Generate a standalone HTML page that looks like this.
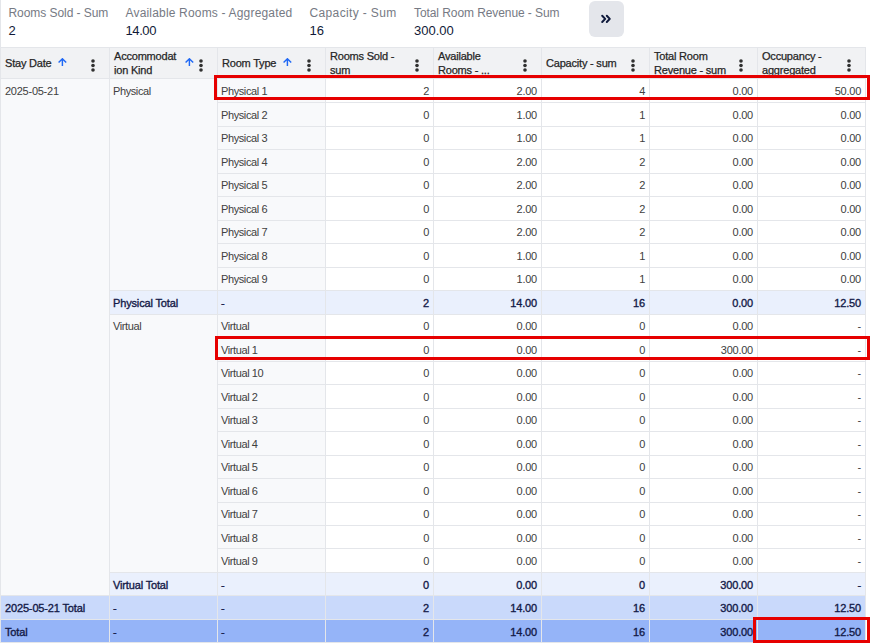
<!DOCTYPE html>
<html><head><meta charset="utf-8"><style>
html,body{margin:0;padding:0;background:#fff;width:870px;height:643px;overflow:hidden;position:relative;font-family:"Liberation Sans", sans-serif}
body>div,body>svg{position:absolute}
.t,.tl,.b,.h,.sl,.sv{position:absolute;white-space:nowrap;line-height:14px}
.t{font-size:11px;color:#404040;letter-spacing:-0.25px}
.tl{font-size:11px;color:#404040;letter-spacing:-0.4px}
.b{font-size:11px;color:#141a48;letter-spacing:-0.15px;-webkit-text-stroke:0.35px #141a48}
.h{font-size:11px;color:#262626;letter-spacing:-0.2px;-webkit-text-stroke:0.25px #262626}
.sl{font-size:12px;color:#767a84}
.sv{font-size:13px;color:#111a38}
</style></head><body>
<div style="left:0px;top:47px;width:866px;height:596px;background:#e4e6ea;"></div>
<div style="left:1px;top:48px;width:108px;height:30px;background:#f1f2f4;"></div>
<div style="left:110px;top:48px;width:107px;height:30px;background:#f1f2f4;"></div>
<div style="left:218px;top:48px;width:107px;height:30px;background:#f1f2f4;"></div>
<div style="left:326px;top:48px;width:107px;height:30px;background:#f1f2f4;"></div>
<div style="left:434px;top:48px;width:107px;height:30px;background:#f1f2f4;"></div>
<div style="left:542px;top:48px;width:107px;height:30px;background:#f1f2f4;"></div>
<div style="left:650px;top:48px;width:107px;height:30px;background:#f1f2f4;"></div>
<div style="left:758px;top:48px;width:107px;height:30px;background:#f1f2f4;"></div>
<div style="left:1px;top:79px;width:108px;height:516px;background:#f8f9fb;"></div>
<div style="left:110px;top:79px;width:107px;height:211px;background:#f8f9fb;"></div>
<div style="left:110px;top:315px;width:107px;height:257px;background:#f8f9fb;"></div>
<div style="left:218px;top:79px;width:107px;height:23px;background:#f8f9fb;"></div>
<div style="left:326px;top:79px;width:107px;height:23px;background:#ffffff;"></div>
<div style="left:434px;top:79px;width:107px;height:23px;background:#ffffff;"></div>
<div style="left:542px;top:79px;width:107px;height:23px;background:#ffffff;"></div>
<div style="left:650px;top:79px;width:107px;height:23px;background:#ffffff;"></div>
<div style="left:758px;top:79px;width:107px;height:23px;background:#ffffff;"></div>
<div style="left:218px;top:103px;width:107px;height:23px;background:#f8f9fb;"></div>
<div style="left:326px;top:103px;width:107px;height:23px;background:#ffffff;"></div>
<div style="left:434px;top:103px;width:107px;height:23px;background:#ffffff;"></div>
<div style="left:542px;top:103px;width:107px;height:23px;background:#ffffff;"></div>
<div style="left:650px;top:103px;width:107px;height:23px;background:#ffffff;"></div>
<div style="left:758px;top:103px;width:107px;height:23px;background:#ffffff;"></div>
<div style="left:218px;top:127px;width:107px;height:22px;background:#f8f9fb;"></div>
<div style="left:326px;top:127px;width:107px;height:22px;background:#ffffff;"></div>
<div style="left:434px;top:127px;width:107px;height:22px;background:#ffffff;"></div>
<div style="left:542px;top:127px;width:107px;height:22px;background:#ffffff;"></div>
<div style="left:650px;top:127px;width:107px;height:22px;background:#ffffff;"></div>
<div style="left:758px;top:127px;width:107px;height:22px;background:#ffffff;"></div>
<div style="left:218px;top:150px;width:107px;height:23px;background:#f8f9fb;"></div>
<div style="left:326px;top:150px;width:107px;height:23px;background:#ffffff;"></div>
<div style="left:434px;top:150px;width:107px;height:23px;background:#ffffff;"></div>
<div style="left:542px;top:150px;width:107px;height:23px;background:#ffffff;"></div>
<div style="left:650px;top:150px;width:107px;height:23px;background:#ffffff;"></div>
<div style="left:758px;top:150px;width:107px;height:23px;background:#ffffff;"></div>
<div style="left:218px;top:174px;width:107px;height:22px;background:#f8f9fb;"></div>
<div style="left:326px;top:174px;width:107px;height:22px;background:#ffffff;"></div>
<div style="left:434px;top:174px;width:107px;height:22px;background:#ffffff;"></div>
<div style="left:542px;top:174px;width:107px;height:22px;background:#ffffff;"></div>
<div style="left:650px;top:174px;width:107px;height:22px;background:#ffffff;"></div>
<div style="left:758px;top:174px;width:107px;height:22px;background:#ffffff;"></div>
<div style="left:218px;top:197px;width:107px;height:23px;background:#f8f9fb;"></div>
<div style="left:326px;top:197px;width:107px;height:23px;background:#ffffff;"></div>
<div style="left:434px;top:197px;width:107px;height:23px;background:#ffffff;"></div>
<div style="left:542px;top:197px;width:107px;height:23px;background:#ffffff;"></div>
<div style="left:650px;top:197px;width:107px;height:23px;background:#ffffff;"></div>
<div style="left:758px;top:197px;width:107px;height:23px;background:#ffffff;"></div>
<div style="left:218px;top:221px;width:107px;height:22px;background:#f8f9fb;"></div>
<div style="left:326px;top:221px;width:107px;height:22px;background:#ffffff;"></div>
<div style="left:434px;top:221px;width:107px;height:22px;background:#ffffff;"></div>
<div style="left:542px;top:221px;width:107px;height:22px;background:#ffffff;"></div>
<div style="left:650px;top:221px;width:107px;height:22px;background:#ffffff;"></div>
<div style="left:758px;top:221px;width:107px;height:22px;background:#ffffff;"></div>
<div style="left:218px;top:244px;width:107px;height:23px;background:#f8f9fb;"></div>
<div style="left:326px;top:244px;width:107px;height:23px;background:#ffffff;"></div>
<div style="left:434px;top:244px;width:107px;height:23px;background:#ffffff;"></div>
<div style="left:542px;top:244px;width:107px;height:23px;background:#ffffff;"></div>
<div style="left:650px;top:244px;width:107px;height:23px;background:#ffffff;"></div>
<div style="left:758px;top:244px;width:107px;height:23px;background:#ffffff;"></div>
<div style="left:218px;top:268px;width:107px;height:22px;background:#f8f9fb;"></div>
<div style="left:326px;top:268px;width:107px;height:22px;background:#ffffff;"></div>
<div style="left:434px;top:268px;width:107px;height:22px;background:#ffffff;"></div>
<div style="left:542px;top:268px;width:107px;height:22px;background:#ffffff;"></div>
<div style="left:650px;top:268px;width:107px;height:22px;background:#ffffff;"></div>
<div style="left:758px;top:268px;width:107px;height:22px;background:#ffffff;"></div>
<div style="left:218px;top:315px;width:107px;height:22px;background:#f8f9fb;"></div>
<div style="left:326px;top:315px;width:107px;height:22px;background:#ffffff;"></div>
<div style="left:434px;top:315px;width:107px;height:22px;background:#ffffff;"></div>
<div style="left:542px;top:315px;width:107px;height:22px;background:#ffffff;"></div>
<div style="left:650px;top:315px;width:107px;height:22px;background:#ffffff;"></div>
<div style="left:758px;top:315px;width:107px;height:22px;background:#ffffff;"></div>
<div style="left:218px;top:338px;width:107px;height:23px;background:#f8f9fb;"></div>
<div style="left:326px;top:338px;width:107px;height:23px;background:#ffffff;"></div>
<div style="left:434px;top:338px;width:107px;height:23px;background:#ffffff;"></div>
<div style="left:542px;top:338px;width:107px;height:23px;background:#ffffff;"></div>
<div style="left:650px;top:338px;width:107px;height:23px;background:#ffffff;"></div>
<div style="left:758px;top:338px;width:107px;height:23px;background:#ffffff;"></div>
<div style="left:218px;top:362px;width:107px;height:22px;background:#f8f9fb;"></div>
<div style="left:326px;top:362px;width:107px;height:22px;background:#ffffff;"></div>
<div style="left:434px;top:362px;width:107px;height:22px;background:#ffffff;"></div>
<div style="left:542px;top:362px;width:107px;height:22px;background:#ffffff;"></div>
<div style="left:650px;top:362px;width:107px;height:22px;background:#ffffff;"></div>
<div style="left:758px;top:362px;width:107px;height:22px;background:#ffffff;"></div>
<div style="left:218px;top:385px;width:107px;height:23px;background:#f8f9fb;"></div>
<div style="left:326px;top:385px;width:107px;height:23px;background:#ffffff;"></div>
<div style="left:434px;top:385px;width:107px;height:23px;background:#ffffff;"></div>
<div style="left:542px;top:385px;width:107px;height:23px;background:#ffffff;"></div>
<div style="left:650px;top:385px;width:107px;height:23px;background:#ffffff;"></div>
<div style="left:758px;top:385px;width:107px;height:23px;background:#ffffff;"></div>
<div style="left:218px;top:409px;width:107px;height:22px;background:#f8f9fb;"></div>
<div style="left:326px;top:409px;width:107px;height:22px;background:#ffffff;"></div>
<div style="left:434px;top:409px;width:107px;height:22px;background:#ffffff;"></div>
<div style="left:542px;top:409px;width:107px;height:22px;background:#ffffff;"></div>
<div style="left:650px;top:409px;width:107px;height:22px;background:#ffffff;"></div>
<div style="left:758px;top:409px;width:107px;height:22px;background:#ffffff;"></div>
<div style="left:218px;top:432px;width:107px;height:23px;background:#f8f9fb;"></div>
<div style="left:326px;top:432px;width:107px;height:23px;background:#ffffff;"></div>
<div style="left:434px;top:432px;width:107px;height:23px;background:#ffffff;"></div>
<div style="left:542px;top:432px;width:107px;height:23px;background:#ffffff;"></div>
<div style="left:650px;top:432px;width:107px;height:23px;background:#ffffff;"></div>
<div style="left:758px;top:432px;width:107px;height:23px;background:#ffffff;"></div>
<div style="left:218px;top:456px;width:107px;height:22px;background:#f8f9fb;"></div>
<div style="left:326px;top:456px;width:107px;height:22px;background:#ffffff;"></div>
<div style="left:434px;top:456px;width:107px;height:22px;background:#ffffff;"></div>
<div style="left:542px;top:456px;width:107px;height:22px;background:#ffffff;"></div>
<div style="left:650px;top:456px;width:107px;height:22px;background:#ffffff;"></div>
<div style="left:758px;top:456px;width:107px;height:22px;background:#ffffff;"></div>
<div style="left:218px;top:479px;width:107px;height:23px;background:#f8f9fb;"></div>
<div style="left:326px;top:479px;width:107px;height:23px;background:#ffffff;"></div>
<div style="left:434px;top:479px;width:107px;height:23px;background:#ffffff;"></div>
<div style="left:542px;top:479px;width:107px;height:23px;background:#ffffff;"></div>
<div style="left:650px;top:479px;width:107px;height:23px;background:#ffffff;"></div>
<div style="left:758px;top:479px;width:107px;height:23px;background:#ffffff;"></div>
<div style="left:218px;top:503px;width:107px;height:22px;background:#f8f9fb;"></div>
<div style="left:326px;top:503px;width:107px;height:22px;background:#ffffff;"></div>
<div style="left:434px;top:503px;width:107px;height:22px;background:#ffffff;"></div>
<div style="left:542px;top:503px;width:107px;height:22px;background:#ffffff;"></div>
<div style="left:650px;top:503px;width:107px;height:22px;background:#ffffff;"></div>
<div style="left:758px;top:503px;width:107px;height:22px;background:#ffffff;"></div>
<div style="left:218px;top:526px;width:107px;height:22px;background:#f8f9fb;"></div>
<div style="left:326px;top:526px;width:107px;height:22px;background:#ffffff;"></div>
<div style="left:434px;top:526px;width:107px;height:22px;background:#ffffff;"></div>
<div style="left:542px;top:526px;width:107px;height:22px;background:#ffffff;"></div>
<div style="left:650px;top:526px;width:107px;height:22px;background:#ffffff;"></div>
<div style="left:758px;top:526px;width:107px;height:22px;background:#ffffff;"></div>
<div style="left:218px;top:549px;width:107px;height:23px;background:#f8f9fb;"></div>
<div style="left:326px;top:549px;width:107px;height:23px;background:#ffffff;"></div>
<div style="left:434px;top:549px;width:107px;height:23px;background:#ffffff;"></div>
<div style="left:542px;top:549px;width:107px;height:23px;background:#ffffff;"></div>
<div style="left:650px;top:549px;width:107px;height:23px;background:#ffffff;"></div>
<div style="left:758px;top:549px;width:107px;height:23px;background:#ffffff;"></div>
<div style="left:110px;top:291px;width:107px;height:23px;background:#eaf0fd;"></div>
<div style="left:110px;top:573px;width:107px;height:22px;background:#eaf0fd;"></div>
<div style="left:218px;top:291px;width:107px;height:23px;background:#eaf0fd;"></div>
<div style="left:218px;top:573px;width:107px;height:22px;background:#eaf0fd;"></div>
<div style="left:326px;top:291px;width:107px;height:23px;background:#eaf0fd;"></div>
<div style="left:326px;top:573px;width:107px;height:22px;background:#eaf0fd;"></div>
<div style="left:434px;top:291px;width:107px;height:23px;background:#eaf0fd;"></div>
<div style="left:434px;top:573px;width:107px;height:22px;background:#eaf0fd;"></div>
<div style="left:542px;top:291px;width:107px;height:23px;background:#eaf0fd;"></div>
<div style="left:542px;top:573px;width:107px;height:22px;background:#eaf0fd;"></div>
<div style="left:650px;top:291px;width:107px;height:23px;background:#eaf0fd;"></div>
<div style="left:650px;top:573px;width:107px;height:22px;background:#eaf0fd;"></div>
<div style="left:758px;top:291px;width:107px;height:23px;background:#eaf0fd;"></div>
<div style="left:758px;top:573px;width:107px;height:22px;background:#eaf0fd;"></div>
<div style="left:1px;top:596px;width:108px;height:23px;background:#c9d9fb;"></div>
<div style="left:1px;top:620px;width:108px;height:22px;background:#95b4f8;"></div>
<div style="left:110px;top:596px;width:107px;height:23px;background:#c9d9fb;"></div>
<div style="left:110px;top:620px;width:107px;height:22px;background:#95b4f8;"></div>
<div style="left:218px;top:596px;width:107px;height:23px;background:#c9d9fb;"></div>
<div style="left:218px;top:620px;width:107px;height:22px;background:#95b4f8;"></div>
<div style="left:326px;top:596px;width:107px;height:23px;background:#c9d9fb;"></div>
<div style="left:326px;top:620px;width:107px;height:22px;background:#95b4f8;"></div>
<div style="left:434px;top:596px;width:107px;height:23px;background:#c9d9fb;"></div>
<div style="left:434px;top:620px;width:107px;height:22px;background:#95b4f8;"></div>
<div style="left:542px;top:596px;width:107px;height:23px;background:#c9d9fb;"></div>
<div style="left:542px;top:620px;width:107px;height:22px;background:#95b4f8;"></div>
<div style="left:650px;top:596px;width:107px;height:23px;background:#c9d9fb;"></div>
<div style="left:650px;top:620px;width:107px;height:22px;background:#95b4f8;"></div>
<div style="left:758px;top:596px;width:107px;height:23px;background:#c9d9fb;"></div>
<div style="left:758px;top:620px;width:107px;height:22px;background:#95b4f8;"></div>
<div class="t" style="left:5px;top:84px">2025-05-21</div>
<div class="tl" style="left:113px;top:84px">Physical</div>
<div class="tl" style="left:113px;top:319px">Virtual</div>
<div class="tl" style="left:221px;top:84px">Physical 1</div>
<div class="t" style="right:441px;top:84px;text-align:right">2</div>
<div class="t" style="right:333px;top:84px;text-align:right">2.00</div>
<div class="t" style="right:225px;top:84px;text-align:right">4</div>
<div class="t" style="right:117px;top:84px;text-align:right">0.00</div>
<div class="t" style="right:9px;top:84px;text-align:right">50.00</div>
<div class="tl" style="left:221px;top:108px">Physical 2</div>
<div class="t" style="right:441px;top:108px;text-align:right">0</div>
<div class="t" style="right:333px;top:108px;text-align:right">1.00</div>
<div class="t" style="right:225px;top:108px;text-align:right">1</div>
<div class="t" style="right:117px;top:108px;text-align:right">0.00</div>
<div class="t" style="right:9px;top:108px;text-align:right">0.00</div>
<div class="tl" style="left:221px;top:131px">Physical 3</div>
<div class="t" style="right:441px;top:131px;text-align:right">0</div>
<div class="t" style="right:333px;top:131px;text-align:right">1.00</div>
<div class="t" style="right:225px;top:131px;text-align:right">1</div>
<div class="t" style="right:117px;top:131px;text-align:right">0.00</div>
<div class="t" style="right:9px;top:131px;text-align:right">0.00</div>
<div class="tl" style="left:221px;top:155px">Physical 4</div>
<div class="t" style="right:441px;top:155px;text-align:right">0</div>
<div class="t" style="right:333px;top:155px;text-align:right">2.00</div>
<div class="t" style="right:225px;top:155px;text-align:right">2</div>
<div class="t" style="right:117px;top:155px;text-align:right">0.00</div>
<div class="t" style="right:9px;top:155px;text-align:right">0.00</div>
<div class="tl" style="left:221px;top:178px">Physical 5</div>
<div class="t" style="right:441px;top:178px;text-align:right">0</div>
<div class="t" style="right:333px;top:178px;text-align:right">2.00</div>
<div class="t" style="right:225px;top:178px;text-align:right">2</div>
<div class="t" style="right:117px;top:178px;text-align:right">0.00</div>
<div class="t" style="right:9px;top:178px;text-align:right">0.00</div>
<div class="tl" style="left:221px;top:202px">Physical 6</div>
<div class="t" style="right:441px;top:202px;text-align:right">0</div>
<div class="t" style="right:333px;top:202px;text-align:right">2.00</div>
<div class="t" style="right:225px;top:202px;text-align:right">2</div>
<div class="t" style="right:117px;top:202px;text-align:right">0.00</div>
<div class="t" style="right:9px;top:202px;text-align:right">0.00</div>
<div class="tl" style="left:221px;top:225px">Physical 7</div>
<div class="t" style="right:441px;top:225px;text-align:right">0</div>
<div class="t" style="right:333px;top:225px;text-align:right">2.00</div>
<div class="t" style="right:225px;top:225px;text-align:right">2</div>
<div class="t" style="right:117px;top:225px;text-align:right">0.00</div>
<div class="t" style="right:9px;top:225px;text-align:right">0.00</div>
<div class="tl" style="left:221px;top:249px">Physical 8</div>
<div class="t" style="right:441px;top:249px;text-align:right">0</div>
<div class="t" style="right:333px;top:249px;text-align:right">1.00</div>
<div class="t" style="right:225px;top:249px;text-align:right">1</div>
<div class="t" style="right:117px;top:249px;text-align:right">0.00</div>
<div class="t" style="right:9px;top:249px;text-align:right">0.00</div>
<div class="tl" style="left:221px;top:272px">Physical 9</div>
<div class="t" style="right:441px;top:272px;text-align:right">0</div>
<div class="t" style="right:333px;top:272px;text-align:right">1.00</div>
<div class="t" style="right:225px;top:272px;text-align:right">1</div>
<div class="t" style="right:117px;top:272px;text-align:right">0.00</div>
<div class="t" style="right:9px;top:272px;text-align:right">0.00</div>
<div class="tl" style="left:221px;top:319px">Virtual</div>
<div class="t" style="right:441px;top:319px;text-align:right">0</div>
<div class="t" style="right:333px;top:319px;text-align:right">0.00</div>
<div class="t" style="right:225px;top:319px;text-align:right">0</div>
<div class="t" style="right:117px;top:319px;text-align:right">0.00</div>
<div class="t" style="right:9px;top:319px;text-align:right">-</div>
<div class="tl" style="left:221px;top:343px">Virtual 1</div>
<div class="t" style="right:441px;top:343px;text-align:right">0</div>
<div class="t" style="right:333px;top:343px;text-align:right">0.00</div>
<div class="t" style="right:225px;top:343px;text-align:right">0</div>
<div class="t" style="right:117px;top:343px;text-align:right">300.00</div>
<div class="t" style="right:9px;top:343px;text-align:right">-</div>
<div class="tl" style="left:221px;top:366px">Virtual 10</div>
<div class="t" style="right:441px;top:366px;text-align:right">0</div>
<div class="t" style="right:333px;top:366px;text-align:right">0.00</div>
<div class="t" style="right:225px;top:366px;text-align:right">0</div>
<div class="t" style="right:117px;top:366px;text-align:right">0.00</div>
<div class="t" style="right:9px;top:366px;text-align:right">-</div>
<div class="tl" style="left:221px;top:390px">Virtual 2</div>
<div class="t" style="right:441px;top:390px;text-align:right">0</div>
<div class="t" style="right:333px;top:390px;text-align:right">0.00</div>
<div class="t" style="right:225px;top:390px;text-align:right">0</div>
<div class="t" style="right:117px;top:390px;text-align:right">0.00</div>
<div class="t" style="right:9px;top:390px;text-align:right">-</div>
<div class="tl" style="left:221px;top:413px">Virtual 3</div>
<div class="t" style="right:441px;top:413px;text-align:right">0</div>
<div class="t" style="right:333px;top:413px;text-align:right">0.00</div>
<div class="t" style="right:225px;top:413px;text-align:right">0</div>
<div class="t" style="right:117px;top:413px;text-align:right">0.00</div>
<div class="t" style="right:9px;top:413px;text-align:right">-</div>
<div class="tl" style="left:221px;top:437px">Virtual 4</div>
<div class="t" style="right:441px;top:437px;text-align:right">0</div>
<div class="t" style="right:333px;top:437px;text-align:right">0.00</div>
<div class="t" style="right:225px;top:437px;text-align:right">0</div>
<div class="t" style="right:117px;top:437px;text-align:right">0.00</div>
<div class="t" style="right:9px;top:437px;text-align:right">-</div>
<div class="tl" style="left:221px;top:460px">Virtual 5</div>
<div class="t" style="right:441px;top:460px;text-align:right">0</div>
<div class="t" style="right:333px;top:460px;text-align:right">0.00</div>
<div class="t" style="right:225px;top:460px;text-align:right">0</div>
<div class="t" style="right:117px;top:460px;text-align:right">0.00</div>
<div class="t" style="right:9px;top:460px;text-align:right">-</div>
<div class="tl" style="left:221px;top:484px">Virtual 6</div>
<div class="t" style="right:441px;top:484px;text-align:right">0</div>
<div class="t" style="right:333px;top:484px;text-align:right">0.00</div>
<div class="t" style="right:225px;top:484px;text-align:right">0</div>
<div class="t" style="right:117px;top:484px;text-align:right">0.00</div>
<div class="t" style="right:9px;top:484px;text-align:right">-</div>
<div class="tl" style="left:221px;top:507px">Virtual 7</div>
<div class="t" style="right:441px;top:507px;text-align:right">0</div>
<div class="t" style="right:333px;top:507px;text-align:right">0.00</div>
<div class="t" style="right:225px;top:507px;text-align:right">0</div>
<div class="t" style="right:117px;top:507px;text-align:right">0.00</div>
<div class="t" style="right:9px;top:507px;text-align:right">-</div>
<div class="tl" style="left:221px;top:531px">Virtual 8</div>
<div class="t" style="right:441px;top:531px;text-align:right">0</div>
<div class="t" style="right:333px;top:531px;text-align:right">0.00</div>
<div class="t" style="right:225px;top:531px;text-align:right">0</div>
<div class="t" style="right:117px;top:531px;text-align:right">0.00</div>
<div class="t" style="right:9px;top:531px;text-align:right">-</div>
<div class="tl" style="left:221px;top:554px">Virtual 9</div>
<div class="t" style="right:441px;top:554px;text-align:right">0</div>
<div class="t" style="right:333px;top:554px;text-align:right">0.00</div>
<div class="t" style="right:225px;top:554px;text-align:right">0</div>
<div class="t" style="right:117px;top:554px;text-align:right">0.00</div>
<div class="t" style="right:9px;top:554px;text-align:right">-</div>
<div class="b" style="left:113px;top:296px">Physical Total</div>
<div class="b" style="left:221px;top:296px">-</div>
<div class="b" style="right:441px;top:296px;text-align:right">2</div>
<div class="b" style="right:333px;top:296px;text-align:right">14.00</div>
<div class="b" style="right:225px;top:296px;text-align:right">16</div>
<div class="b" style="right:117px;top:296px;text-align:right">0.00</div>
<div class="b" style="right:9px;top:296px;text-align:right">12.50</div>
<div class="b" style="left:113px;top:578px">Virtual Total</div>
<div class="b" style="left:221px;top:578px">-</div>
<div class="b" style="right:441px;top:578px;text-align:right">0</div>
<div class="b" style="right:333px;top:578px;text-align:right">0.00</div>
<div class="b" style="right:225px;top:578px;text-align:right">0</div>
<div class="b" style="right:117px;top:578px;text-align:right">300.00</div>
<div class="b" style="right:9px;top:578px;text-align:right">-</div>
<div class="b" style="left:5px;top:601px">2025-05-21 Total</div>
<div class="b" style="left:113px;top:601px">-</div>
<div class="b" style="left:221px;top:601px">-</div>
<div class="b" style="right:441px;top:601px;text-align:right">2</div>
<div class="b" style="right:333px;top:601px;text-align:right">14.00</div>
<div class="b" style="right:225px;top:601px;text-align:right">16</div>
<div class="b" style="right:117px;top:601px;text-align:right">300.00</div>
<div class="b" style="right:9px;top:601px;text-align:right">12.50</div>
<div class="b" style="left:5px;top:625px">Total</div>
<div class="b" style="left:113px;top:625px">-</div>
<div class="b" style="left:221px;top:625px">-</div>
<div class="b" style="right:441px;top:625px;text-align:right">2</div>
<div class="b" style="right:333px;top:625px;text-align:right">14.00</div>
<div class="b" style="right:225px;top:625px;text-align:right">16</div>
<div class="b" style="right:117px;top:625px;text-align:right">300.00</div>
<div class="b" style="right:9px;top:625px;text-align:right">12.50</div>
<div class="h" style="left:5px;top:56px">Stay Date</div>
<svg style="position:absolute;left:89.5px;top:58px" width="6" height="15" viewBox="0 0 6 15"><circle cx="3" cy="3" r="1.8" fill="#303030"/><circle cx="3" cy="7.5" r="1.8" fill="#303030"/><circle cx="3" cy="12" r="1.8" fill="#303030"/></svg>
<div class="h" style="left:114px;top:49px">Accommodat<br>ion Kind</div>
<svg style="position:absolute;left:197.5px;top:58px" width="6" height="15" viewBox="0 0 6 15"><circle cx="3" cy="3" r="1.8" fill="#303030"/><circle cx="3" cy="7.5" r="1.8" fill="#303030"/><circle cx="3" cy="12" r="1.8" fill="#303030"/></svg>
<div class="h" style="left:222px;top:56px">Room Type</div>
<svg style="position:absolute;left:305.5px;top:58px" width="6" height="15" viewBox="0 0 6 15"><circle cx="3" cy="3" r="1.8" fill="#303030"/><circle cx="3" cy="7.5" r="1.8" fill="#303030"/><circle cx="3" cy="12" r="1.8" fill="#303030"/></svg>
<div class="h" style="left:330px;top:49px">Rooms Sold -<br>sum</div>
<svg style="position:absolute;left:413.5px;top:58px" width="6" height="15" viewBox="0 0 6 15"><circle cx="3" cy="3" r="1.8" fill="#303030"/><circle cx="3" cy="7.5" r="1.8" fill="#303030"/><circle cx="3" cy="12" r="1.8" fill="#303030"/></svg>
<div class="h" style="left:438px;top:49px">Available<br>Rooms - ...</div>
<svg style="position:absolute;left:521.5px;top:58px" width="6" height="15" viewBox="0 0 6 15"><circle cx="3" cy="3" r="1.8" fill="#303030"/><circle cx="3" cy="7.5" r="1.8" fill="#303030"/><circle cx="3" cy="12" r="1.8" fill="#303030"/></svg>
<div class="h" style="left:546px;top:56px">Capacity - sum</div>
<svg style="position:absolute;left:629.5px;top:58px" width="6" height="15" viewBox="0 0 6 15"><circle cx="3" cy="3" r="1.8" fill="#303030"/><circle cx="3" cy="7.5" r="1.8" fill="#303030"/><circle cx="3" cy="12" r="1.8" fill="#303030"/></svg>
<div class="h" style="left:654px;top:49px">Total Room<br>Revenue - sum</div>
<svg style="position:absolute;left:737.5px;top:58px" width="6" height="15" viewBox="0 0 6 15"><circle cx="3" cy="3" r="1.8" fill="#303030"/><circle cx="3" cy="7.5" r="1.8" fill="#303030"/><circle cx="3" cy="12" r="1.8" fill="#303030"/></svg>
<div class="h" style="left:762px;top:49px">Occupancy -<br>aggregated</div>
<svg style="position:absolute;left:845.5px;top:58px" width="6" height="15" viewBox="0 0 6 15"><circle cx="3" cy="3" r="1.8" fill="#303030"/><circle cx="3" cy="7.5" r="1.8" fill="#303030"/><circle cx="3" cy="12" r="1.8" fill="#303030"/></svg>
<div style="left:57px;top:58px;width:10px;height:9px"><svg style="display:block" width="10" height="9" viewBox="0 0 10 9"><path d="M5.4 8V0.9M1.6 4.6L5.4 0.8 9.2 4.6" stroke="#1f68f5" stroke-width="1.45" fill="none"/></svg></div>
<div style="left:184px;top:58px;width:10px;height:9px"><svg style="display:block" width="10" height="9" viewBox="0 0 10 9"><path d="M5.4 8V0.9M1.6 4.6L5.4 0.8 9.2 4.6" stroke="#1f68f5" stroke-width="1.45" fill="none"/></svg></div>
<div style="left:282px;top:58px;width:10px;height:9px"><svg style="display:block" width="10" height="9" viewBox="0 0 10 9"><path d="M5.4 8V0.9M1.6 4.6L5.4 0.8 9.2 4.6" stroke="#1f68f5" stroke-width="1.45" fill="none"/></svg></div>
<div class="sl" style="left:8.5px;top:6px;letter-spacing:-0.06px">Rooms Sold - Sum</div>
<div class="sv" style="left:8.5px;top:24px;letter-spacing:0px">2</div>
<div class="sl" style="left:125.5px;top:6px;letter-spacing:0.18px">Available Rooms - Aggregated</div>
<div class="sv" style="left:125.5px;top:24px;letter-spacing:-0.4px">14.00</div>
<div class="sl" style="left:309.5px;top:6px;letter-spacing:0.36px">Capacity - Sum</div>
<div class="sv" style="left:309.5px;top:24px;letter-spacing:0px">16</div>
<div class="sl" style="left:414px;top:6px;letter-spacing:-0.08px">Total Room Revenue - Sum</div>
<div class="sv" style="left:414px;top:24px;letter-spacing:0px">300.00</div>
<div style="left:589px;top:1px;width:35px;height:36px;border-radius:6px;background:#e4e6eb"></div>
<svg style="position:absolute;left:600px;top:14px" width="12" height="10" viewBox="0 0 12 10"><path d="M2.2 1.8L5.2 4.9 2.2 8M6.8 1.8L9.8 4.9 6.8 8" stroke="#0f1a3c" stroke-width="2" fill="none" stroke-linecap="round" stroke-linejoin="round"/></svg>
<div style="left:0px;top:0px;width:1px;height:643px;background:#e4e6ea;"></div>
<div style="left:214px;top:75px;width:650px;height:19px;border:3px solid #e60000"></div>
<div style="left:215px;top:336px;width:649px;height:18px;border:3px solid #e60000"></div>
<div style="left:753px;top:617px;width:111px;height:20px;border:3px solid #e60000"></div>
</body></html>
